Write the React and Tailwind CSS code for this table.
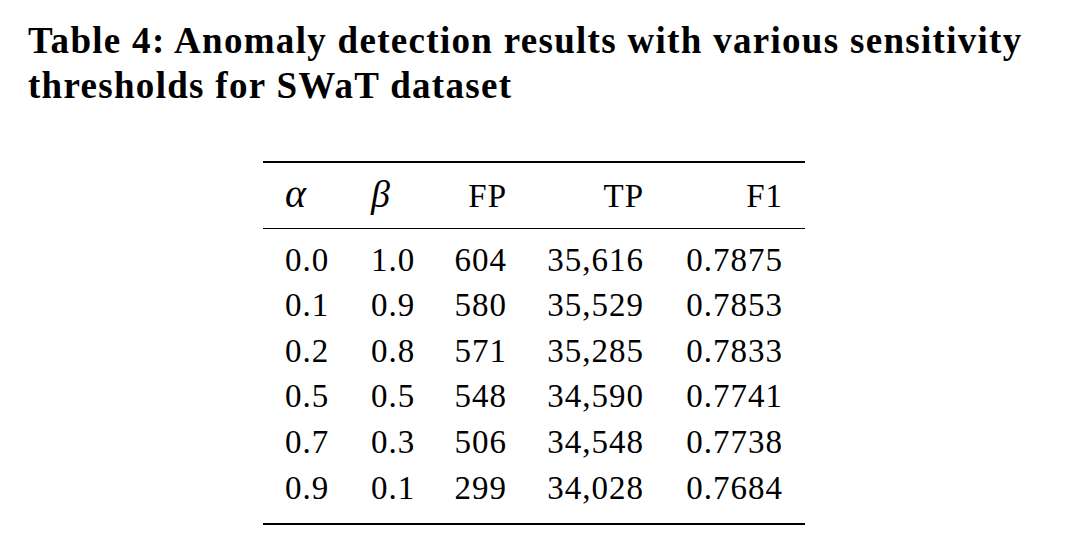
const rows = [
  ["0.0", "1.0", "604", "35,616", "0.7875"],
  ["0.1", "0.9", "580", "35,529", "0.7853"],
  ["0.2", "0.8", "571", "35,285", "0.7833"],
  ["0.5", "0.5", "548", "34,590", "0.7741"],
  ["0.7", "0.3", "506", "34,548", "0.7738"],
  ["0.9", "0.1", "299", "34,028", "0.7684"],
];

const serif = "font-['Liberation_Serif','Times_New_Roman',serif]";
const cols = "grid grid-cols-[86px_49px_87px_137px_139px] pl-[22px]";

function Row({ cells, className = "" }) {
  return (
    <div className={`${cols} h-[45.6px] leading-[45.6px] ${className}`}>
      <span className="text-left">{cells[0]}</span>
      <span className="text-left">{cells[1]}</span>
      <span className="text-right">{cells[2]}</span>
      <span className="text-right">{cells[3]}</span>
      <span className="text-right">{cells[4]}</span>
    </div>
  );
}

export default function App() {
  return (
    <div className={`w-[1080px] h-[555px] bg-white text-black ${serif} overflow-hidden`}>
      <h1 className="pl-[28px] pt-[18px] text-[37px] leading-[45px] font-bold tracking-[1.3px]">
        Table 4: Anomaly detection results with various sensitivity
        <br />
        thresholds for SWaT dataset
      </h1>

      <div className="ml-[263px] mt-[53px] w-[542px] text-[33px] tracking-[1px]">
        <div className="border-t-2 border-black pt-[11px] pb-[8px]">
          <Row
            cells={[
              <i key="a" className="text-[40px] leading-none">α</i>,
              <i key="b" className="text-[38px] leading-none">β</i>,
              "FP",
              "TP",
              "F1",
            ]}
          />
        </div>
        <div className="border-t-[1.3px] border-black pt-[9px] pb-[12px]">
          {rows.map((r, i) => (
            <Row key={i} cells={r} />
          ))}
        </div>
        <div className="border-t-2 border-black" />
      </div>
    </div>
  );
}
